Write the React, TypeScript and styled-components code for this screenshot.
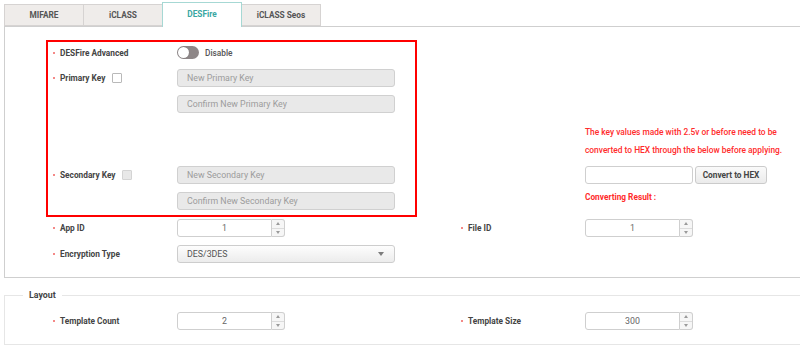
import React from 'react';
import styled, { createGlobalStyle } from 'styled-components';

const GlobalStyle = createGlobalStyle`
  html, body {
    margin: 0;
    padding: 0;
    background: #fff;
  }
  body {
    font-family: Roboto, "Liberation Sans", Arial, sans-serif;
    font-size: 8px;
    color: #4a4a4a;
  }
  * {
    box-sizing: border-box;
  }
`;

// Page + tabs
const Page = styled.div`
  width: 800px;
  height: 359px;
  overflow: hidden;
  padding-left: 4px;
`;

const TabBar = styled.div`
  display: flex;
  align-items: flex-end;
  height: 26px;
  padding-top: 2px;
`;

const Tab = styled.div<{ $active?: boolean }>`
  position: relative;
  z-index: ${p => (p.$active ? 1 : 0)};
  width: 80px;
  height: ${p => (p.$active ? '25px' : '22px')};
  margin-bottom: ${p => (p.$active ? '-1px' : '0')};
  margin-left: -1px;
  display: flex;
  align-items: center;
  justify-content: center;
  padding-bottom: ${p => (p.$active ? '2px' : '0')};
  background: ${p => (p.$active ? '#fff' : '#efecea')};
  border: 1px solid ${p => (p.$active ? '#a6d8d4' : '#d6d3d2')};
  border-bottom: ${p => (p.$active ? 'none' : '1px solid #d6d3d2')};
  font-weight: 700;
  font-size: 8.3px;
  color: ${p => (p.$active ? '#3aa7a2' : '#555')};

  &:first-child {
    margin-left: 0;
  }
`;

// Main panel
const Panel = styled.div`
  border: 1px solid #cfcfcf;
  border-right: none;
  padding: 13px 0 14px 41px;
`;

const TopGrid = styled.div`
  display: grid;
  grid-template-columns: 415px 1fr;
`;

const RedBox = styled.div`
  width: 371px;
  border: 2px solid #ff0000;
  padding: 4px 0 5px 5px;
  display: flex;
  flex-direction: column;
`;

const Row = styled.div<{ $mt?: number }>`
  display: grid;
  grid-template-columns: 124px 1fr;
  align-items: start;
  margin-top: ${p => p.$mt ?? 0}px;
`;

const Label = styled.div<{ $h?: number }>`
  display: flex;
  align-items: center;
  height: ${p => p.$h ?? 18}px;
  font-weight: 700;
  font-size: 8.3px;
  color: #444;
  white-space: nowrap;

  &::before {
    content: '';
    width: 2px;
    height: 2px;
    border-radius: 50%;
    background: #f0625f;
    margin-right: 5px;
  }
`;

const Check = styled.span<{ $disabled?: boolean }>`
  display: inline-block;
  width: 10px;
  height: 10px;
  margin-left: 7px;
  border: 1px solid ${p => (p.$disabled ? '#d4d4d4' : '#b9b9b9')};
  background: ${p => (p.$disabled ? '#e8e8e8' : '#fff')};
  border-radius: 1px;
`;

const FieldStack = styled.div`
  display: flex;
  flex-direction: column;
  gap: 8px;
`;

const KeyInput = styled.input`
  width: 218px;
  height: 18px;
  margin: 0;
  padding: 0 0 0 9px;
  border: 1px solid #d0d0d0;
  border-radius: 3px;
  background: #e9e9e9;
  font-family: inherit;
  font-size: 8.8px;
  outline: none;

  &::placeholder {
    color: #9c9c9c;
  }
`;

const ToggleWrap = styled.div`
  display: flex;
  align-items: center;
  gap: 6px;
  height: 13px;
  font-size: 8.3px;
  font-weight: 500;
  color: #555;
`;

const Track = styled.span<{ $on?: boolean }>`
  position: relative;
  width: 22px;
  height: 13px;
  border-radius: 7px;
  background: ${p => (p.$on ? '#3aa7a2' : '#8e8788')};

  &::after {
    content: '';
    position: absolute;
    top: 1px;
    left: ${p => (p.$on ? '10px' : '1px')};
    width: 11px;
    height: 11px;
    border-radius: 50%;
    background: #fff;
    box-shadow: 0 0 1px rgba(0, 0, 0, 0.3);
  }
`;

// HEX converter
const Converter = styled.div`
  align-self: end;
  padding: 0 0 11px 124px;
`;

const Notice = styled.div`
  color: #ff2b2b;
  font-size: 8.4px;
  font-weight: 500;
  line-height: 18px;
  white-space: nowrap;
`;

const ConvertRow = styled.div`
  display: flex;
  gap: 2px;
  margin-top: 7px;
`;

const HexInput = styled.input`
  width: 108px;
  height: 18px;
  margin: 0;
  padding: 0 6px;
  border: 1px solid #cfcfcf;
  border-radius: 3px;
  background: #fff;
  outline: none;
`;

const Button = styled.button`
  width: 72px;
  height: 18px;
  margin: 0;
  padding: 0;
  border: 1px solid #cbcbcb;
  border-radius: 3px;
  background: linear-gradient(#fafafa, #ebebeb);
  font-family: inherit;
  font-size: 8.3px;
  font-weight: 700;
  color: #444;
`;

const Result = styled.div`
  margin-top: 4px;
  line-height: 18px;
  color: #ff2b2b;
  font-size: 8.3px;
  font-weight: 700;
`;

// lower rows
const FieldGrid = styled.div<{ $ml: number; $mt?: number }>`
  display: grid;
  grid-template-columns: 408px 1fr;
  row-gap: 8px;
  margin-left: ${p => p.$ml}px;
  margin-top: ${p => p.$mt ?? 0}px;
`;

const Spinner = styled.div`
  display: flex;
  width: 108px;
  height: 18px;
`;

const SpinValue = styled.div`
  flex: 1;
  display: flex;
  align-items: center;
  justify-content: center;
  border: 1px solid #cfcfcf;
  border-radius: 3px 0 0 3px;
  background: #fff;
  font-size: 8.8px;
  color: #666;
`;

const SpinArrows = styled.div`
  width: 13px;
  display: flex;
  flex-direction: column;
  border: 1px solid #cfcfcf;
  border-left: none;
  border-radius: 0 3px 3px 0;
  background: #f6f6f6;
`;

const SpinBtn = styled.span<{ $down?: boolean }>`
  flex: 1;
  display: flex;
  align-items: center;
  justify-content: center;
  border-top: ${p => (p.$down ? '1px solid #dcdcdc' : 'none')};

  &::after {
    content: '';
    border-left: 2.5px solid transparent;
    border-right: 2.5px solid transparent;
    ${p => (p.$down ? 'border-top: 3px solid #9a9a9a;' : 'border-bottom: 3px solid #9a9a9a;')}
  }
`;

const Select = styled.div`
  width: 218px;
  height: 18px;
  display: flex;
  align-items: center;
  justify-content: space-between;
  padding: 0 10px 0 9px;
  border: 1px solid #cdcdcd;
  border-radius: 3px;
  background: linear-gradient(#fdfdfd, #ececec);
  font-size: 8.8px;
  color: #555;

  &::after {
    content: '';
    border-left: 3.5px solid transparent;
    border-right: 3.5px solid transparent;
    border-top: 4px solid #7c7c7c;
  }
`;

const Fieldset = styled.fieldset`
  margin: 10px 0 0;
  padding: 10px 0 14px 18px;
  border: 1px solid #e6e6e6;
  border-right: none;
  min-width: 0;
`;

const Legend = styled.legend`
  padding: 0 6px;
  line-height: 14px;
  font-size: 8.8px;
  font-weight: 700;
  color: #444;
`;

const NumberField: React.FC<{ value: string }> = ({ value }) => (
  <Spinner>
    <SpinValue>{value}</SpinValue>
    <SpinArrows>
      <SpinBtn />
      <SpinBtn $down />
    </SpinArrows>
  </Spinner>
);

const tabs = ['MIFARE', 'iCLASS', 'DESFire', 'iCLASS Seos'];

export default function App() {
  return (
    <>
      <GlobalStyle />
      <Page>
        <TabBar>
          {tabs.map(t => (
            <Tab key={t} $active={t === 'DESFire'}>{t}</Tab>
          ))}
        </TabBar>

        <Panel>
          <TopGrid>
            <RedBox>
              <Row>
                <Label $h={13}>DESFire Advanced</Label>
                <ToggleWrap>
                  <Track />
                  Disable
                </ToggleWrap>
              </Row>
              <Row $mt={10}>
                <Label>
                  Primary Key
                  <Check />
                </Label>
                <FieldStack>
                  <KeyInput readOnly placeholder="New Primary Key" />
                  <KeyInput readOnly placeholder="Confirm New Primary Key" />
                </FieldStack>
              </Row>
              <Row $mt={53}>
                <Label>
                  Secondary Key
                  <Check $disabled />
                </Label>
                <FieldStack>
                  <KeyInput readOnly placeholder="New Secondary Key" />
                  <KeyInput readOnly placeholder="Confirm New Secondary Key" />
                </FieldStack>
              </Row>
            </RedBox>

            <Converter>
              <Notice>
                The key values made with 2.5v or before need to be
                <br />
                converted to HEX through the below before applying.
              </Notice>
              <ConvertRow>
                <HexInput readOnly />
                <Button>Convert to HEX</Button>
              </ConvertRow>
              <Result>Converting Result :</Result>
            </Converter>
          </TopGrid>

          <FieldGrid $ml={7} $mt={2}>
            <Row>
              <Label>App ID</Label>
              <NumberField value="1" />
            </Row>
            <Row>
              <Label>File ID</Label>
              <NumberField value="1" />
            </Row>
            <Row>
              <Label>Encryption Type</Label>
              <Select>DES/3DES</Select>
            </Row>
          </FieldGrid>
        </Panel>

        <Fieldset>
          <Legend>Layout</Legend>
          <FieldGrid $ml={30}>
            <Row>
              <Label>Template Count</Label>
              <NumberField value="2" />
            </Row>
            <Row>
              <Label>Template Size</Label>
              <NumberField value="300" />
            </Row>
          </FieldGrid>
        </Fieldset>
      </Page>
    </>
  );
}
